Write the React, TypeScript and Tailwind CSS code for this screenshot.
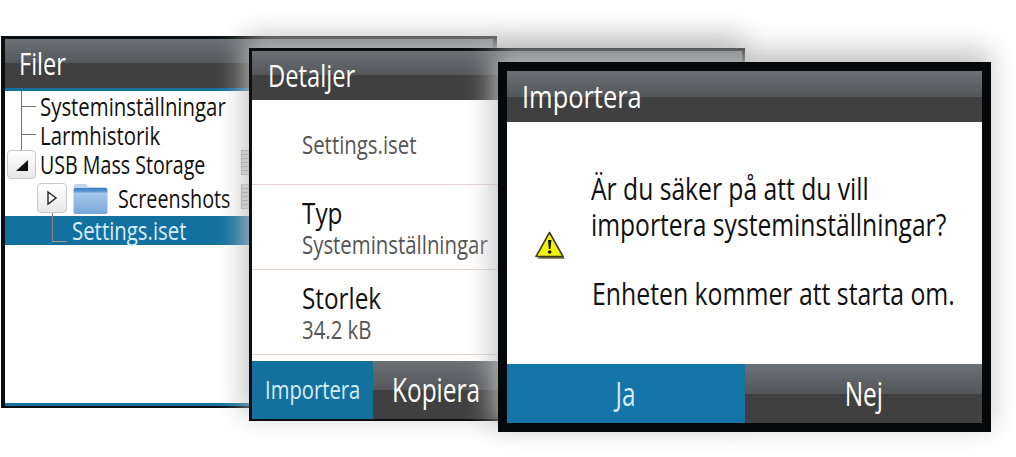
const font = { fontFamily: '"Open Sans", "Noto Sans", sans-serif' };

function Squeezed({ children, className = "" }: { children: React.ReactNode; className?: string }) {
  return <span className={`inline-block origin-left whitespace-nowrap ${className}`}>{children}</span>;
}

function FolderIcon() {
  return (
    <svg width="35" height="32" viewBox="0 0 35 32" className="shrink-0">
      <defs>
        <linearGradient id="folderBody" x1="0" y1="0" x2="0" y2="1">
          <stop offset="0" stopColor="#3a7fc2" />
          <stop offset="0.14" stopColor="#5f9ad4" />
          <stop offset="0.2" stopColor="#a4c6e8" />
          <stop offset="1" stopColor="#79a8da" />
        </linearGradient>
      </defs>
      <path d="M1 4q0-2 2-2h9q2 0 3 2l1 1h16q2 0 2 2v3H1z" fill="#c3d5e8" />
      <rect x="0.5" y="6" width="34" height="26" rx="2" fill="url(#folderBody)" />
    </svg>
  );
}

function ToggleBox({ open, className = "" }: { open?: boolean; className?: string }) {
  return (
    <div className={`flex items-center justify-center rounded-[4px] border border-[#c9c9c9] bg-gradient-to-b from-white to-[#e8e8e8] ${className}`}>
      <svg width="14" height="16" viewBox="0 0 14 16">
        {open ? (
          <path d="M1 14L13 3v11z" fill="#111" />
        ) : (
          <path d="M3 2l8 6-8 6z" fill="#fff" stroke="#222" strokeWidth="1.4" />
        )}
      </svg>
    </div>
  );
}

function GridStub({ className = "" }: { className?: string }) {
  return (
    <div className={`absolute left-[236px] h-[25px] w-[9px] border border-[#aaa] bg-[repeating-linear-gradient(#d8d8d8_0_3px,#a9a9a9_3px_4px)] ${className}`} />
  );
}

const barGradient = "bg-gradient-to-b from-[#6b7175] via-[#54575a] via-50% to-[#404040] to-50%";

function FilesWindow() {
  return (
    <div className="absolute left-[1px] top-[36px] flex h-[372px] w-[496px] flex-col border-x-[4px] border-b-[2px] border-t-[3px] border-[#0c0f11] bg-white" style={font}>
      <div className={`flex h-[49px] shrink-0 items-center pl-[14px] text-[31px] text-white ${barGradient}`}>
        <Squeezed className="scale-x-[0.76]">Filer</Squeezed>
      </div>
      <div className="relative flex-1 border-y-[3px] border-[#14719f] pt-[1px] text-[25px] leading-[29px] text-[#111]">
        <div className="absolute left-[16px] top-0 h-[59px] w-px bg-[#7a7270]" />
        <div className="absolute left-[16px] top-[15px] h-px w-[15px] bg-[#7a7270]" />
        <div className="absolute left-[16px] top-[43px] h-px w-[15px] bg-[#7a7270]" />
        <div className="absolute left-[47px] top-[122px] h-[28px] w-px bg-[#8a8280]" />
        <div className="absolute left-[47px] top-[150px] h-px w-[15px] bg-[#a09a98]" />
        <GridStub className="top-[59px]" />
        <GridStub className="top-[93px]" />
        <div className="absolute left-[236px] top-[93px] h-px w-[20px] bg-[#cbb]" />

        <div className="flex h-[29px] items-center pl-[35px]"><Squeezed className="scale-x-[0.815]">Systeminställningar</Squeezed></div>
        <div className="flex h-[29px] items-center pl-[35px]"><Squeezed className="scale-x-[0.815]">Larmhistorik</Squeezed></div>
        <div className="flex h-[29px] items-center pl-[2px]">
          <ToggleBox open className="h-[29px] w-[29px]" />
          <Squeezed className="ml-[4px] scale-x-[0.785]">USB Mass Storage</Squeezed>
        </div>
        <div className="mt-[4px] flex h-[30px] items-center pl-[32px]">
          <ToggleBox className="h-[30px] w-[30px]" />
          <div className="ml-[6px]"><FolderIcon /></div>
          <Squeezed className="ml-[10px] scale-x-[0.79]">Screenshots</Squeezed>
        </div>
        <div className="mt-[3px] flex h-[29px] items-center bg-[#14719f] pl-[67px] text-[#d4eefa]">
          <Squeezed className="scale-x-[0.815]">Settings.iset</Squeezed>
        </div>
      </div>
    </div>
  );
}

function DetailRow({ title, value }: { title: string; value: string }) {
  return (
    <div className="flex h-[85px] flex-col justify-center border-b border-[#e3d2d2] pl-[50px]">
      <Squeezed className="scale-x-[0.81] text-[30px] leading-[33px] text-[#111]">{title}</Squeezed>
      <Squeezed className="scale-x-[0.815] text-[25px] leading-[30px] text-[#555]">{value}</Squeezed>
    </div>
  );
}

function DetailsWindow() {
  return (
    <div className="absolute left-[249px] top-[48px] flex h-[373px] w-[496px] flex-col border-x-[3px] border-b-[2px] border-t-[3px] border-[#0c0f11] bg-white shadow-[-3px_-9px_26px_2px_rgba(190,190,190,0.95)]" style={font}>
      <div className={`flex h-[49px] shrink-0 items-center pl-[16px] text-[31px] text-white ${barGradient}`}>
        <Squeezed className="scale-x-[0.765]">Detaljer</Squeezed>
      </div>
      <div className="flex-1">
        <div className="flex h-[85px] items-center border-b border-[#e3d2d2] pl-[50px] pt-[5px]">
          <Squeezed className="scale-x-[0.815] text-[25px] text-[#555]">Settings.iset</Squeezed>
        </div>
        <DetailRow title="Typ" value="Systeminställningar" />
        <DetailRow title="Storlek" value="34.2 kB" />
      </div>
      <div className="flex h-[58px] shrink-0">
        <div className="flex w-[121px] items-center bg-[#14719f] pl-[13px] text-[25px] text-[#d4eefa]">
          <Squeezed className="scale-x-[0.81]">Importera</Squeezed>
        </div>
        <div className={`flex flex-1 items-center pl-[19px] text-[33px] text-white ${barGradient}`}>
          <Squeezed className="scale-x-[0.74]">Kopiera</Squeezed>
        </div>
      </div>
    </div>
  );
}

function WarningIcon() {
  return (
    <svg width="32" height="32" viewBox="0 0 32 32" className="shrink-0">
      <path d="M16 3.5L30 28.5H3z" fill="#6d6d3c" transform="translate(0.8 1.2)" />
      <path d="M15.5 3.5L29 27.5H2z" fill="#f2f20f" stroke="#3c3c22" strokeWidth="1.6" strokeLinejoin="round" />
      <path d="M14 11h3.4l-.9 9h-1.6z" fill="#111" />
      <circle cx="15.7" cy="23" r="1.8" fill="#111" />
    </svg>
  );
}

function ImportDialog() {
  return (
    <div className="absolute left-[498px] top-[62px] flex h-[370px] w-[493px] flex-col border-[9px] border-[#050708] bg-white shadow-[-3px_-9px_26px_2px_rgba(190,190,190,0.95)]" style={font}>
      <div className={`flex h-[51px] shrink-0 items-center pl-[15px] text-[31px] text-white ${barGradient}`}>
        <Squeezed className="scale-x-[0.82]">Importera</Squeezed>
      </div>
      <div className="flex flex-1 items-center pl-[27px] text-[31px] leading-[36px] text-[#111]">
        <div className="mt-[4px] w-[57px] shrink-0"><WarningIcon /></div>
        <div className="-mt-[5px] flex flex-col">
          <Squeezed className="scale-x-[0.795]">Är du säker på att du vill</Squeezed>
          <Squeezed className="scale-x-[0.795]">importera systeminställningar?</Squeezed>
          <Squeezed className="ml-[1px] mt-[33px] scale-x-[0.8]">Enheten kommer att starta om.</Squeezed>
        </div>
      </div>
      <div className="flex h-[59px] shrink-0 text-[33px]">
        <div className="flex w-[238px] items-center justify-center bg-[#1574a8] text-[#d4eefa]">
          <span className="inline-block scale-x-[0.74]">Ja</span>
        </div>
        <div className={`flex flex-1 items-center justify-center text-white ${barGradient}`}>
          <span className="inline-block scale-x-[0.74]">Nej</span>
        </div>
      </div>
    </div>
  );
}

export default function App() {
  return (
    <div className="relative h-[457px] w-[1016px] overflow-hidden bg-white">
      <FilesWindow />
      <DetailsWindow />
      <ImportDialog />
    </div>
  );
}
